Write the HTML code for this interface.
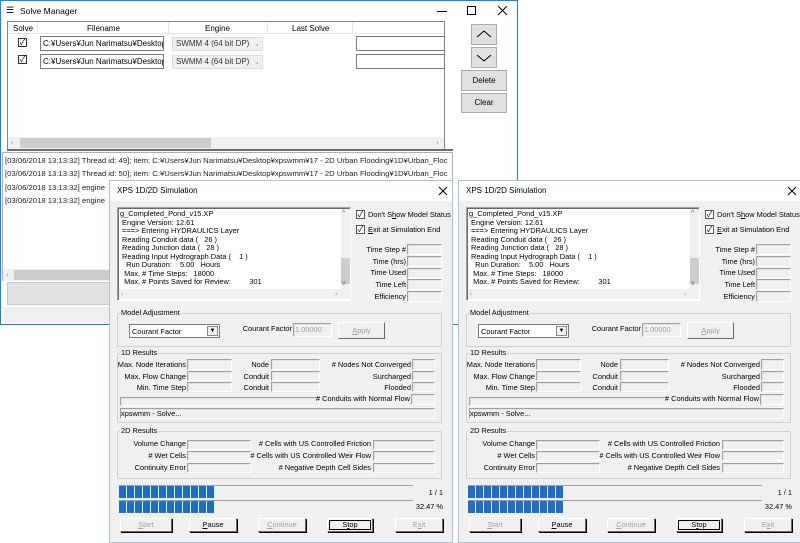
<!DOCTYPE html>
<html><head><meta charset="utf-8">
<style>
*{box-sizing:border-box;margin:0;padding:0}
body{width:800px;height:543px;overflow:hidden;background:#fff;position:relative;font-family:"Liberation Sans","Noto Sans CJK JP",sans-serif;font-size:8px;color:#000}
.a{position:absolute}
.t{position:absolute;white-space:nowrap;line-height:10px}
.r{text-align:right}
.sunk{position:absolute;background:#f0f0f0;border-top:1px solid #a0a0a0;border-left:1px solid #a0a0a0;border-bottom:1px solid #fff;border-right:1px solid #fff;box-shadow:inset 1px 1px 0 #e3e3e3}
.grp{position:absolute;border:1px solid #d0d0d0;border-radius:2px}
.gl{position:absolute;background:#f0f0f0;padding:0 1px;line-height:10px;white-space:nowrap}
.btn{position:absolute;background:#e1e1e1;border:1px solid #adadad;text-align:center;line-height:13px;height:15px}
.cbtn{position:absolute;background:#f0f0f0;border-top:1px solid #fff;border-left:1px solid #fff;border-right:1px solid #696969;border-bottom:1px solid #696969;box-shadow:1px 1px 0 #000;text-align:center;line-height:12px;height:14px}
.dis{color:#a0a0a0}
.cb{position:absolute;width:9px;height:9px;border:1px solid #333;background:#fff;font-size:8px;line-height:7px;text-align:center}
.dlg{position:absolute;top:180px;width:344px;height:363px;background:#f0f0f0;border:1px solid #a9c2dc;font-size:7.4px}
.blk{position:absolute;top:0;width:7px;height:12px;background:#1c6fc4}
u{text-decoration:underline}
</style></head><body>

<!-- Solve Manager -->
<div class="a" style="left:0;top:0;width:518px;height:325px;border:1px solid #1883d7;background:#fff"></div>
<div class="t" style="left:6px;top:5px;font-size:9px">&#9776;</div>
<div class="t" style="left:20px;top:6px;font-size:8.5px">Solve Manager</div>
<div class="a" style="left:437px;top:11px;width:10px;height:1px;background:#000"></div>
<div class="a" style="left:467px;top:6px;width:9px;height:9px;border:1px solid #000"></div>
<svg class="a" style="left:497px;top:5px" width="11" height="11"><path d="M1 1L10 10M10 1L1 10" stroke="#000" stroke-width="1"/></svg>

<div class="a" style="left:7px;top:21px;width:438px;height:129px;border:1px solid #828790;background:#fff"></div>
<div class="a" style="left:8px;top:22px;width:436px;height:12px;background:#fff;border-bottom:1px solid #e5e5e5"></div>
<div class="a" style="left:37px;top:22px;width:1px;height:12px;background:#e5e5e5"></div>
<div class="a" style="left:168px;top:22px;width:1px;height:12px;background:#e5e5e5"></div>
<div class="a" style="left:267px;top:22px;width:1px;height:12px;background:#e5e5e5"></div>
<div class="a" style="left:352px;top:22px;width:1px;height:12px;background:#e5e5e5"></div>
<div class="t" style="left:13px;top:24px">Solve</div>
<div class="t" style="left:87px;top:24px">Filename</div>
<div class="t" style="left:205px;top:24px">Engine</div>
<div class="t" style="left:292px;top:24px">Last Solve</div>

<div class="cb" style="left:18px;top:38px">✓</div>
<div class="a" style="left:40px;top:36px;width:124px;height:15px;border:1px solid #7a7a7a"></div>
<div class="t" style="left:43px;top:39px;width:120px;overflow:hidden">C:¥Users¥Jun Narimatsu¥Desktop¥</div>
<div class="a" style="left:172px;top:37px;width:91px;height:14px;background:#f0f0f0;border:1px solid #ddd"></div>
<div class="t" style="left:176px;top:39px;color:#333">SWMM 4 (64 bit DP)&nbsp;&nbsp;<span style="color:#aaa">⌄</span></div>
<div class="a" style="left:356px;top:36px;width:89px;height:15px;border:1px solid #7a7a7a"></div>

<div class="cb" style="left:18px;top:55px">✓</div>
<div class="a" style="left:40px;top:54px;width:124px;height:15px;border:1px solid #7a7a7a"></div>
<div class="t" style="left:43px;top:57px;width:120px;overflow:hidden">C:¥Users¥Jun Narimatsu¥Desktop¥</div>
<div class="a" style="left:172px;top:55px;width:91px;height:14px;background:#f0f0f0;border:1px solid #ddd"></div>
<div class="t" style="left:176px;top:57px;color:#333">SWMM 4 (64 bit DP)&nbsp;&nbsp;<span style="color:#aaa">⌄</span></div>
<div class="a" style="left:356px;top:54px;width:89px;height:15px;border:1px solid #7a7a7a"></div>

<div class="a" style="left:8px;top:137px;width:436px;height:12px;background:#f0f0f0"></div>
<div class="a" style="left:20px;top:138px;width:191px;height:10px;background:#cdcdcd"></div>
<div class="t" style="left:11px;top:138px;color:#999">‹</div>
<div class="t" style="left:436px;top:138px;color:#999">›</div>
<div class="a" style="left:7px;top:149px;width:446px;height:2px;background:#6d6d6d"></div>

<div class="btn" style="left:471px;top:24px;width:26px;height:21px"></div>
<svg class="a" style="left:476px;top:29px" width="16" height="10"><path d="M1 8L8 2L15 8" fill="none" stroke="#000" stroke-width="1"/></svg>
<div class="btn" style="left:471px;top:47px;width:26px;height:21px"></div>
<svg class="a" style="left:476px;top:53px" width="16" height="10"><path d="M1 2L8 8L15 2" fill="none" stroke="#000" stroke-width="1"/></svg>
<div class="btn" style="left:461px;top:70px;width:46px;height:21px;line-height:19px">Delete</div>
<div class="btn" style="left:461px;top:93px;width:46px;height:20px;line-height:18px">Clear</div>

<div class="a" style="left:2px;top:152px;width:451px;height:129px;border:1px solid #b0b0b0;background:#fff"></div>
<div class="t" style="left:5px;top:156px;color:#222;font-size:7.7px">[03/06/2018 13:13:32] Thread id: 49]; item: C:¥Users¥Jun Narimatsu¥Desktop¥xpswmm¥17 - 2D Urban Flooding¥1D¥Urban_Floc</div>
<div class="t" style="left:5px;top:169px;color:#222;font-size:7.7px">[03/06/2018 13:13:32] Thread id: 50]; item: C:¥Users¥Jun Narimatsu¥Desktop¥xpswmm¥17 - 2D Urban Flooding¥1D¥Urban_Floc</div>
<div class="t" style="left:5px;top:183px;color:#222;font-size:7.7px">[03/06/2018 13:13:32] engine</div>
<div class="t" style="left:5px;top:196px;color:#222;font-size:7.7px">[03/06/2018 13:13:32] engine</div>
<div class="a" style="left:3px;top:269px;width:449px;height:12px;background:#f0f0f0"></div>
<div class="a" style="left:14px;top:270px;width:100px;height:10px;background:#cdcdcd"></div>
<div class="t" style="left:6px;top:270px;color:#999">‹</div>
<div class="a" style="left:7px;top:282px;width:110px;height:23px;background:#e1e1e1;border:1px solid #c8c8c8"></div>
<div class="a" style="left:4px;top:307px;width:113px;height:16px;background:#f0eeee"></div>

<!-- Dialogs -->
<div class="dlg" style="left:109px" id="d1">
  <div class="a" style="left:0;top:0;width:342px;height:20px;background:#fff"></div>
  <div class="t" style="left:7px;top:5px;font-size:8px">XPS 1D/2D Simulation</div>
  <svg class="a" style="left:328px;top:5px" width="10" height="10"><path d="M1 1L9 9M9 1L1 9" stroke="#000" stroke-width="1"/></svg>

  <div class="a" style="left:7px;top:26px;width:234px;height:94px;background:#fff;border-top:1px solid #a0a0a0;border-left:1px solid #a0a0a0;border-bottom:1px solid #fff;border-right:1px solid #fff;box-shadow:inset 1px 1px 0 #696969"></div>
  <div class="t" style="left:10px;top:29px;line-height:8.5px">g_Completed_Pond_v15.XP<br>&nbsp;Engine Version: 12.61<br>&nbsp;===&gt; Entering HYDRAULICS Layer<br>&nbsp;Reading Conduit data (&nbsp;&nbsp;&nbsp;26 )<br>&nbsp;Reading Junction data (&nbsp;&nbsp;&nbsp;28 )<br>&nbsp;Reading Input Hydrograph Data (&nbsp;&nbsp;&nbsp;&nbsp;1 )<br>&nbsp;&nbsp;&nbsp;Run Duration:&nbsp;&nbsp;&nbsp;&nbsp;5.00&nbsp;&nbsp;&nbsp;Hours<br>&nbsp;&nbsp;Max. # Time Steps:&nbsp;&nbsp;&nbsp;18000<br>&nbsp;&nbsp;Max. # Points Saved for Review:&nbsp;&nbsp;&nbsp;&nbsp;&nbsp;&nbsp;&nbsp;&nbsp;&nbsp;301</div>
  <div class="a" style="left:231px;top:28px;width:9px;height:80px;background:#f0f0f0"></div>
  <div class="a" style="left:231px;top:77px;width:9px;height:26px;background:#cdcdcd"></div>
  <div class="t" style="left:232px;top:28px;color:#666;font-size:7px">^</div>
  <div class="t" style="left:232px;top:98px;color:#666;font-size:7px">v</div>
  <div class="a" style="left:9px;top:108px;width:231px;height:10px;background:#f0f0f0"></div>
  <div class="t" style="left:11px;top:108px;color:#aaa">‹</div>
  <div class="t" style="left:225px;top:108px;color:#aaa">›</div>

  <div class="cb" style="left:246px;top:29px;border-color:#555">✓</div>
  <div class="t" style="left:258px;top:29px">Don't S<u>h</u>ow Model Status</div>
  <div class="cb" style="left:246px;top:44px;border-color:#555">✓</div>
  <div class="t" style="left:258px;top:44px"><u>E</u>xit at Simulation End</div>

  <div class="t r" style="left:236px;width:60px;top:64px">Time Step #</div>
  <div class="t r" style="left:236px;width:60px;top:76px">Time (hrs)</div>
  <div class="t r" style="left:236px;width:60px;top:87px">Time Used</div>
  <div class="t r" style="left:236px;width:60px;top:99px">Time Left</div>
  <div class="t r" style="left:236px;width:60px;top:111px">Efficiency</div>
  <div class="sunk" style="left:297px;top:63px;width:35px;height:11px"></div>
  <div class="sunk" style="left:297px;top:75px;width:35px;height:11px"></div>
  <div class="sunk" style="left:297px;top:87px;width:35px;height:11px"></div>
  <div class="sunk" style="left:297px;top:98px;width:35px;height:11px"></div>
  <div class="sunk" style="left:297px;top:110px;width:35px;height:11px"></div>

  <div class="grp" style="left:7px;top:132px;width:325px;height:34px"></div>
  <div class="gl" style="left:10px;top:127px">Model Adjustment</div>
  <div class="a" style="left:19px;top:143px;width:91px;height:14px;background:#fff;border:1px solid #7a7a7a"></div>
  <div class="t" style="left:22px;top:146px">Courant Factor</div>
  <div class="a" style="left:97px;top:145px;width:11px;height:10px;background:#f0f0f0;border:1px solid #888;font-size:6px;text-align:center;line-height:8px">▼</div>
  <div class="t r" style="left:120px;width:62px;top:143px">Courant Factor</div>
  <div class="sunk" style="left:183px;top:142px;width:39px;height:14px"></div>
  <div class="t dis" style="left:185px;top:144px">1.00000</div>
  <div class="cbtn dis" style="left:228px;top:141px;width:47px;height:17px;line-height:15px;box-shadow:none"><u>A</u>pply</div>

  <div class="grp" style="left:7px;top:172px;width:325px;height:70px"></div>
  <div class="gl" style="left:10px;top:167px">1D Results</div>
  <div class="t r" style="left:0;width:76px;top:179px">Max. Node Iterations</div>
  <div class="t r" style="left:0;width:76px;top:191px">Max. Flow Change</div>
  <div class="t r" style="left:0;width:76px;top:202px">Min. Time Step</div>
  <div class="sunk" style="left:77px;top:178px;width:45px;height:11px"></div>
  <div class="sunk" style="left:77px;top:190px;width:45px;height:10px"></div>
  <div class="sunk" style="left:77px;top:201px;width:45px;height:10px"></div>
  <div class="t r" style="left:100px;width:59px;top:179px">Node</div>
  <div class="t r" style="left:100px;width:59px;top:191px">Conduit</div>
  <div class="t r" style="left:100px;width:59px;top:202px">Conduit</div>
  <div class="sunk" style="left:161px;top:178px;width:49px;height:11px"></div>
  <div class="sunk" style="left:161px;top:190px;width:49px;height:10px"></div>
  <div class="sunk" style="left:161px;top:201px;width:49px;height:10px"></div>
  <div class="t r" style="left:200px;width:101px;top:179px"># Nodes Not Converged</div>
  <div class="t r" style="left:200px;width:101px;top:191px">Surcharged</div>
  <div class="t r" style="left:200px;width:101px;top:202px">Flooded</div>
  <div class="sunk" style="left:302px;top:178px;width:23px;height:11px"></div>
  <div class="sunk" style="left:302px;top:190px;width:23px;height:10px"></div>
  <div class="sunk" style="left:302px;top:201px;width:23px;height:10px"></div>
  <div class="sunk" style="left:10px;top:216px;width:200px;height:9px"></div>
  <div class="t r" style="left:180px;width:120px;top:213px"># Conduits with Normal Flow</div>
  <div class="sunk" style="left:301px;top:213px;width:24px;height:11px"></div>
  <div class="sunk" style="left:10px;top:227px;width:315px;height:11px"></div>
  <div class="t" style="left:11px;top:228px">xpswmm - Solve...</div>

  <div class="grp" style="left:7px;top:250px;width:325px;height:48px"></div>
  <div class="gl" style="left:10px;top:245px">2D Results</div>
  <div class="t r" style="left:0;width:76px;top:258px">Volume Change</div>
  <div class="t r" style="left:0;width:76px;top:270px"># Wet Cells</div>
  <div class="t r" style="left:0;width:76px;top:282px">Continuity Error</div>
  <div class="sunk" style="left:77px;top:259px;width:64px;height:10px"></div>
  <div class="sunk" style="left:77px;top:270px;width:64px;height:10px"></div>
  <div class="sunk" style="left:77px;top:282px;width:64px;height:10px"></div>
  <div class="t r" style="left:120px;width:141px;top:258px"># Cells with US Controlled Friction</div>
  <div class="t r" style="left:120px;width:141px;top:270px"># Cells with US Controlled Weir Flow</div>
  <div class="t r" style="left:120px;width:141px;top:282px"># Negative Depth Cell Sides</div>
  <div class="sunk" style="left:263px;top:259px;width:62px;height:10px"></div>
  <div class="sunk" style="left:263px;top:270px;width:62px;height:10px"></div>
  <div class="sunk" style="left:263px;top:282px;width:62px;height:10px"></div>

  <div class="a" style="left:9px;top:304px;width:294px;height:1px;background:#a0a0a0"></div>
  <div class="a pb" style="left:9px;top:305px;width:96px;height:12px"></div>
  <div class="a" style="left:9px;top:319px;width:294px;height:1px;background:#a0a0a0"></div>
  <div class="a pb" style="left:9px;top:320px;width:96px;height:12px"></div>
  <div class="t r" style="left:280px;width:53px;top:307px">1 / 1</div>
  <div class="t r" style="left:280px;width:53px;top:321px">32.47 %</div>

  <div class="cbtn dis" style="left:10px;top:337px;width:52px"><u>S</u>tart</div>
  <div class="cbtn" style="left:79px;top:337px;width:48px"><u>P</u>ause</div>
  <div class="cbtn dis" style="left:148px;top:337px;width:48px"><u>C</u>ontinue</div>
  <div class="cbtn" style="left:217px;top:337px;width:46px;outline:1px solid #000;outline-offset:-3px">S<u>t</u>op</div>
  <div class="cbtn dis" style="left:285px;top:337px;width:48px">E<u>x</u>it</div>
</div>

<script>
(function(){
  var d1=document.getElementById('d1');
  d1.querySelectorAll('.pb').forEach(function(b){for(var i=0;i<12;i++){var k=document.createElement('div');k.className='blk';k.style.left=(i*8)+'px';b.appendChild(k);}});
  var d2=d1.cloneNode(true);d2.id='d2';d2.style.left='458px';document.body.appendChild(d2);
})();
</script>
</body></html>
